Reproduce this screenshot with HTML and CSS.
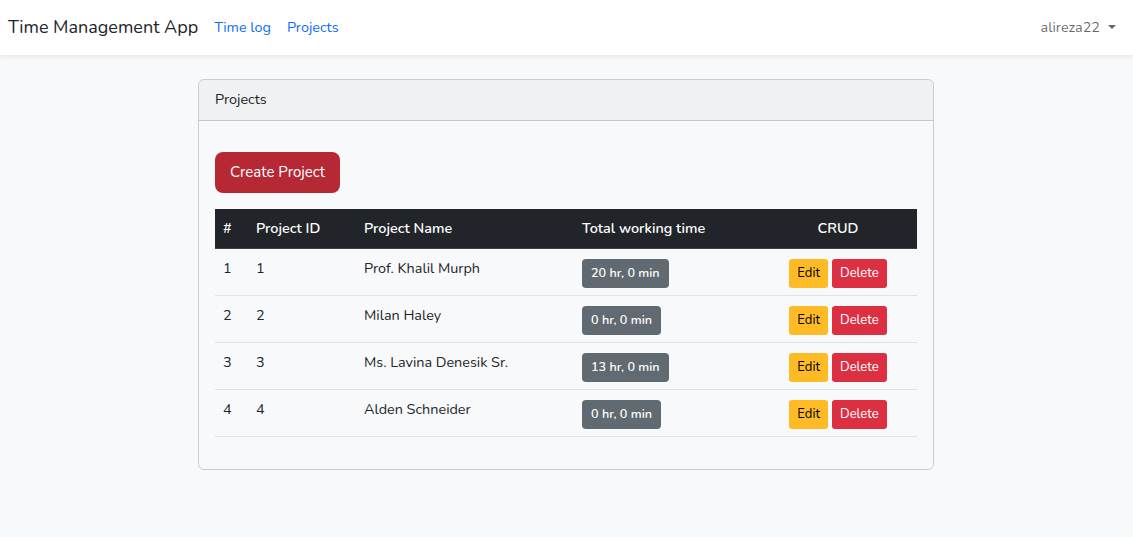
FILE: index.html
```html
<!DOCTYPE html>
<html lang="en">
<head>
<meta charset="utf-8">
<title>Time Management App</title>
<link rel="stylesheet" href="styles.css">
</head>
<body>
<nav class="navbar">
  <div class="nav-left">
    <a class="brand" href="#">Time Management App</a>
    <a class="nav-link" href="#">Time log</a>
    <a class="nav-link" href="#">Projects</a>
  </div>
  <a class="user" href="#">alireza22<span class="caret"></span></a>
</nav>
<main class="main">
  <div class="card">
    <div class="card-header">Projects</div>
    <div class="card-body">
      <div class="actions"><a class="btn-create" href="#">Create Project</a></div>
      <table class="table">
        <thead>
          <tr><th class="c-num">#</th><th class="c-id">Project ID</th><th class="c-name">Project Name</th><th class="c-time">Total working time</th><th class="c-crud">CRUD</th></tr>
        </thead>
        <tbody>
          <tr><td>1</td><td>1</td><td>Prof. Khalil Murph</td><td><span class="badge">20 hr, 0 min</span></td><td class="crud"><a class="btn-sm edit" href="#">Edit</a><a class="btn-sm del" href="#">Delete</a></td></tr>
          <tr><td>2</td><td>2</td><td>Milan Haley</td><td><span class="badge">0 hr, 0 min</span></td><td class="crud"><a class="btn-sm edit" href="#">Edit</a><a class="btn-sm del" href="#">Delete</a></td></tr>
          <tr><td>3</td><td>3</td><td>Ms. Lavina Denesik Sr.</td><td><span class="badge">13 hr, 0 min</span></td><td class="crud"><a class="btn-sm edit" href="#">Edit</a><a class="btn-sm del" href="#">Delete</a></td></tr>
          <tr><td>4</td><td>4</td><td>Alden Schneider</td><td><span class="badge">0 hr, 0 min</span></td><td class="crud"><a class="btn-sm edit" href="#">Edit</a><a class="btn-sm del" href="#">Delete</a></td></tr>
        </tbody>
      </table>
    </div>
  </div>
</main>
</body>
</html>
```
FILE: styles.css
```css
* { box-sizing: border-box; }
body {
  margin: 0;
  background: #f8f9fa;
  font-family: Nunito, Lato, "Noto Sans", sans-serif;
  font-size: 14.4px;
  line-height: 1.6;
  color: #212529;
}
a { text-decoration: none; }
.navbar {
  height: 55px;
  background: #fff;
  box-shadow: 0 2px 4px rgba(0,0,0,.075);
  display: flex;
  align-items: center;
  justify-content: space-between;
  padding: 0 17px 0 8px;
}
.nav-left { display: flex; align-items: center; }
.brand {
  color: #212529;
  font-size: 18px;
  margin-right: 8px;
}
.nav-link {
  color: #0d6efd;
  padding: 8px 8px;
}
.user {
  color: rgba(0,0,0,.6);
  display: flex;
  align-items: center;
}
.caret {
  display: inline-block;
  margin-left: 8px;
  border-top: 4px solid rgba(0,0,0,.6);
  border-left: 4px solid transparent;
  border-right: 4px solid transparent;
}
.main { padding: 24px 0; }
.card {
  width: 736px;
  margin: 0 0 0 198px;
  border: 1px solid rgba(0,0,0,.175);
  border-radius: 6px;
}
.card-header {
  background: rgba(0,0,0,.03);
  border-bottom: 1px solid rgba(0,0,0,.175);
  padding: 8px 16px;
  height: 41px;
  border-radius: 5px 5px 0 0;
}
.card-body { padding: 31px 16px 16px; }
.actions { margin-bottom: 16px; }
.btn-create {
  display: inline-block;
  background: #b52834;
  color: #fff;
  font-size: 15px;
  line-height: 1.5;
  padding: 9px 15px;
  height: 41px;
  border-radius: 8px;
}
.table {
  width: 100%;
  border-collapse: collapse;
  margin-bottom: 16px;
}
.table th {
  background: #212529;
  color: #fff;
  font-weight: 600;
  text-align: left;
  padding: 7px 8px;
  height: 39px;
  border-bottom: 1px solid #3a3f44;
}
.table th.c-crud { text-align: center; }
.c-num { width: 33px; }
.c-id { width: 108px; }
.c-name { width: 218px; }
.c-time { width: 185px; }
.table tbody tr { height: 47px; }
.table td {
  padding: 8px 8px 0;
  border-bottom: 1px solid #dee2e6;
  vertical-align: top;
  height: 47px;
}
.badge {
  display: inline-block;
  margin-top: 2px;
  background: #616a70;
  color: #fff;
  font-size: 12.6px;
  font-weight: 600;
  line-height: 1.5;
  padding: 5px 9px;
  height: 29px;
  border-radius: 4px;
}
.table td.crud { text-align: center; padding-left: 0; padding-right: 0; }
.btn-sm {
  display: inline-block;
  margin-top: 2px;
  font-size: 13px;
  line-height: 1.5;
  padding: 5px 8px;
  height: 29px;
  border-radius: 3px;
}
.edit { background: #ffbb26; color: #000; margin-right: 4px; }
.del { background: #dc3042; color: #fff; }
```
